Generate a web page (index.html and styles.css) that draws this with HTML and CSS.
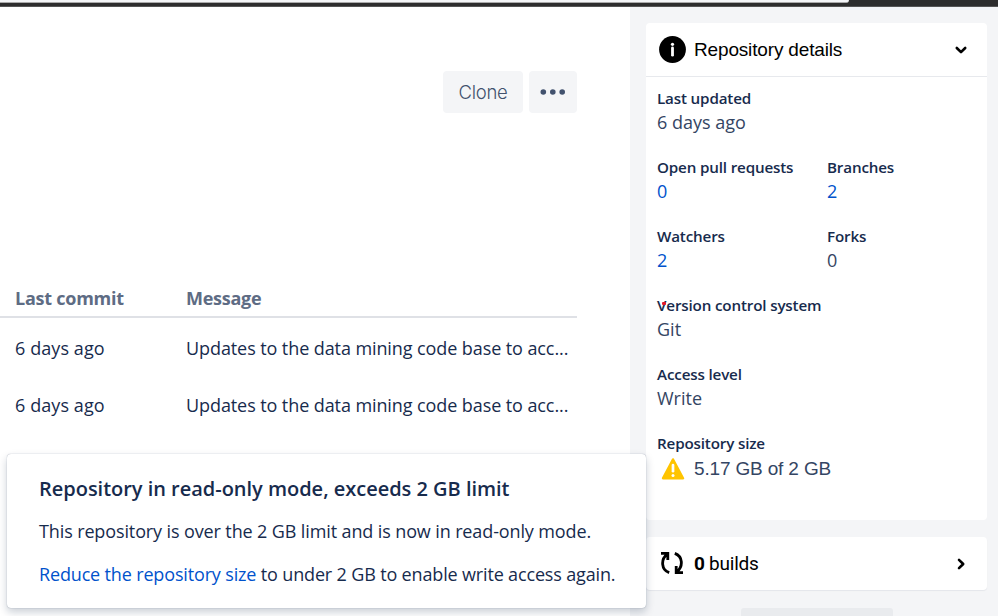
FILE: index.html
```html
<!DOCTYPE html>
<html lang="en">
<head>
<meta charset="utf-8">
<title>Repository</title>
<link rel="stylesheet" href="styles.css">
</head>
<body>
<div class="topbar"><div class="tab"></div></div>
<div class="page">
  <main class="main">
    <div class="actions">
      <button class="btn clone">Clone</button>
      <button class="btn more" aria-label="More"><svg width="26" height="6" viewBox="0 0 26 6"><circle cx="3.3" cy="3" r="2.8"/><circle cx="12.8" cy="3" r="2.8"/><circle cx="22.2" cy="3" r="2.8"/></svg></button>
    </div>
    <div class="commits">
      <div class="row head"><span>Last commit</span><span class="msg">Message</span></div>
      <div class="row"><span class="date">6 days ago</span><span class="msg">Updates to the data mining code base to acc...</span></div>
      <div class="row"><span class="date">6 days ago</span><span class="msg">Updates to the data mining code base to acc...</span></div>
    </div>
  </main>
  <aside class="side">
    <section class="card details">
      <header class="card-head">
        <svg width="27" height="27" viewBox="0 0 27 27"><circle cx="13.5" cy="13.5" r="13.4"/><circle cx="13.5" cy="8.3" r="1.6" fill="#fff"/><path d="M13.5 12v7.2" stroke="#fff" stroke-width="2.8" stroke-linecap="round"/></svg>
        <span class="title">Repository details</span>
        <svg class="chev" width="14" height="14" viewBox="0 0 14 14"><path d="M2.8 5 7 9.2 11.2 5" fill="none" stroke="#000" stroke-width="2.6" stroke-linecap="round" stroke-linejoin="round"/></svg>
      </header>
      <dl class="facts">
        <div class="wide"><dt>Last updated</dt><dd>6 days ago</dd></div>
        <div><dt>Open pull requests</dt><dd class="link">0</dd></div>
        <div><dt>Branches</dt><dd class="link">2</dd></div>
        <div><dt>Watchers</dt><dd class="link strong">2</dd></div>
        <div><dt>Forks</dt><dd>0</dd></div>
        <div class="wide vcs"><dt>Version control system<i class="speck"></i></dt><dd>Git</dd></div>
        <div class="wide"><dt>Access level</dt><dd>Write</dd></div>
        <div class="wide last"><dt>Repository size</dt>
          <dd class="size"><svg width="24" height="22" viewBox="0 0 24 22"><path d="M12 1.300 22.100 20.300H1.900z" fill="#ffc400" stroke="#ffc400" stroke-width="2.200" stroke-linejoin="round"/><path d="M12 7v6.200" stroke="#fff" stroke-width="2.700" stroke-linecap="round"/><circle cx="12" cy="17.500" r="1.500" fill="#fff"/></svg><span>5.17 GB of 2 GB</span></dd></div>
      </dl>
    </section>
    <section class="card builds">
      <svg class="sync" width="22" height="22" viewBox="0 0 22 22" fill="none" stroke="#000" stroke-width="2.800"><path d="M8.200 20.600C.1 17.600-.4 7.500 6.200 2.200M0 1.400h6.800v6.600M13.800 1.400C21.900 4.400 22.400 14.500 15.800 19.800M22 20.600h-6.800V14"/></svg>
      <span class="count"><b>0</b> builds</span>
      <svg class="chev" width="14" height="14" viewBox="0 0 14 14"><path d="M5 2.800 9.200 7 5 11.200" fill="none" stroke="#000" stroke-width="2.600" stroke-linecap="round" stroke-linejoin="round"/></svg>
    </section>
    <div class="stub"></div>
  </aside>
</div>
<div class="popup">
  <h2>Repository in read-only mode, exceeds 2 GB limit</h2>
  <p>This repository is over the 2 GB limit and is now in read-only mode.</p>
  <p class="second"><a>Reduce the repository size</a> to under 2 GB to enable write access again.</p>
</div>
</body>
</html>
```
FILE: styles.css
```css
* { box-sizing: border-box; }
body { margin: 0; width: 998px; height: 616px; overflow: hidden; background: #fff; color: #172b4d; font: 18px/24px "Open Sans", "Noto Sans", sans-serif; position: relative; }
.topbar { height: 7px; background: #2d2d2d; border-bottom: 1px solid #555; }
.tab { width: 849px; height: 3px; background: #f4f5f7; border-bottom: 1px solid #aaa; border-bottom-right-radius: 5px; }
.page { display: flex; height: 609px; }
.main { width: 630px; padding-top: 64px; }
.actions { display: flex; gap: 6px; justify-content: flex-end; margin-right: 53px; height: 42px; }
.btn { border: 0; border-radius: 4px; background: #f4f5f7; color: #42526e; padding: 0; display: flex; align-items: center; justify-content: center; fill: #42526e; }
.clone { width: 80px; font: 350 18.500px "Inter", sans-serif; letter-spacing: -.3px; }
.more { width: 48px; }
.commits { width: 577px; margin-top: 167px; }
.row { display: flex; height: 57px; padding-left: 15px; align-items: center; white-space: nowrap; letter-spacing: -.09px; }
.row > span:first-child { width: 171px; }
.row .date { letter-spacing: .08px; }
.head { height: 38px; color: #5e6c84; font-weight: 700; letter-spacing: -.25px; border-bottom: 2px solid #dfe1e6; margin-bottom: 1px; }
.side { width: 368px; background: #f4f5f7; padding: 16px 11px 0 16px; }
.card { background: #fff; border-radius: 4px; }
.details { height: 497px; }
.card-head { height: 54px; display: flex; align-items: center; padding: 0 19px 0 13px; border-bottom: 1px solid #e7e9ed; color: #000; }
.title { margin-left: 8px; font: 19px/24px "Liberation Sans", sans-serif; letter-spacing: -.16px; }
.chev { margin-left: auto; }
.facts { margin: 0; padding: 9px 0 0 11px; display: grid; grid-template-columns: 170px 1fr; row-gap: 20.800px; }
.wide { grid-column: 1 / -1; }
.vcs { padding-top: 1px; }
dt { font-size: 15.200px; font-weight: 600; letter-spacing: -.16px; white-space: nowrap; position: relative; width: max-content; }
dd { margin: 0; color: #344563; width: max-content; }
.link { color: #0052cc; }
.strong { font-weight: 500; }
.speck { position: absolute; left: 5px; top: 9px; width: 4px; height: 3px; background: #e31b2b; border-radius: 1px; }
.size { display: flex; align-items: center; gap: 9px; padding: 2px 0 0 4px; font: 19px/24px "Liberation Sans", sans-serif; letter-spacing: -.16px; }
.builds { height: 53px; margin-top: 17px; display: flex; align-items: center; padding: 0 19px 0 15px; color: #000; box-shadow: 0 1px 1px #e4e6ea; }
.sync { margin-top: -2px; }
.count { margin-left: 11px; font: 19px/24px Roboto, sans-serif; letter-spacing: -.25px; }
.stub { width: 152px; height: 10px; margin: 18px 0 0 95px; background: #e9ebee; border-radius: 3px 3px 0 0; }
.popup { position: absolute; left: 7px; top: 454px; width: 639px; height: 154px; padding: 21px 32px; background: #fff; border-radius: 4px; box-shadow: 0 0 1px rgba(9,30,66,.45), 0 4px 8px rgba(9,30,66,.22); white-space: nowrap; }
.popup h2 { margin: 0; width: max-content; font-size: 20px; line-height: 28px; font-weight: 600; letter-spacing: -.02px; }
.popup p { margin: 15px 0 0; line-height: 26px; width: max-content; letter-spacing: -.12px; }
.popup .second { margin-top: 17px; letter-spacing: -.155px; }
.popup a { color: #0052cc; }
```
